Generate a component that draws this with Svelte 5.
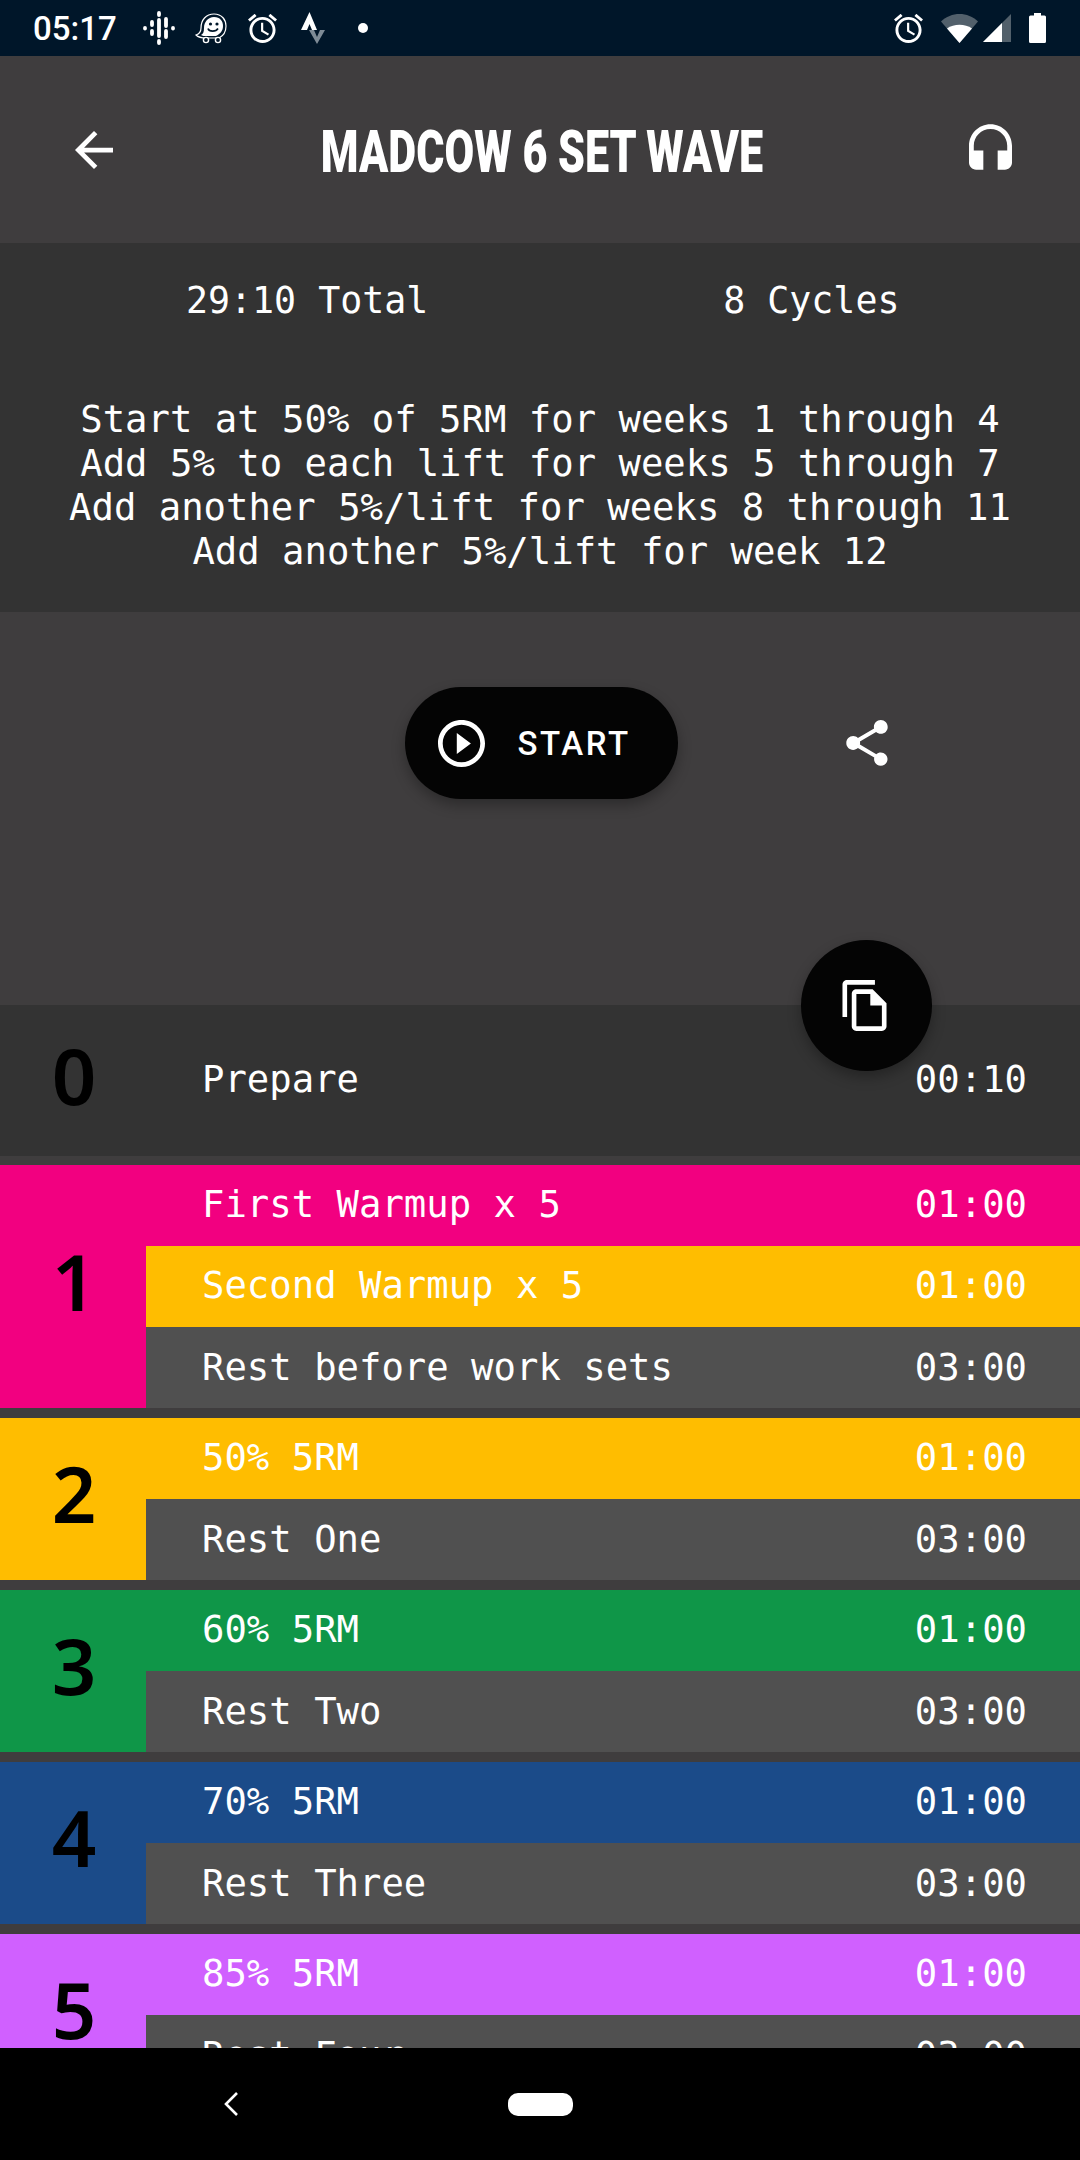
<script lang="ts">
interface Step {
	label: string
	time: string
	color?: string
}

interface Group {
	n: number
	color: string
	steps: Step[]
}

const pink = '#f20080'
const amber = '#ffbd00'
const green = '#0f9648'
const blue = '#1b4b89'
const purple = '#d060ff'

const groups: Group[] = [
	{
		n: 1,
		color: pink,
		steps: [
			{ label: 'First Warmup x 5', time: '01:00', color: pink },
			{ label: 'Second Warmup x 5', time: '01:00', color: amber },
			{ label: 'Rest before work sets', time: '03:00' }
		]
	},
	{
		n: 2,
		color: amber,
		steps: [
			{ label: '50% 5RM', time: '01:00', color: amber },
			{ label: 'Rest One', time: '03:00' }
		]
	},
	{
		n: 3,
		color: green,
		steps: [
			{ label: '60% 5RM', time: '01:00', color: green },
			{ label: 'Rest Two', time: '03:00' }
		]
	},
	{
		n: 4,
		color: blue,
		steps: [
			{ label: '70% 5RM', time: '01:00', color: blue },
			{ label: 'Rest Three', time: '03:00' }
		]
	},
	{
		n: 5,
		color: purple,
		steps: [
			{ label: '85% 5RM', time: '01:00', color: purple },
			{ label: 'Rest Four', time: '03:00' }
		]
	}
]

const notes = [
	'Start at 50% of 5RM for weeks 1 through 4',
	'Add 5% to each lift for weeks 5 through 7',
	'Add another 5%/lift for weeks 8 through 11',
	'Add another 5%/lift for week 12'
]

const alarm =
	'M22 5.72l-4.600-3.860-1.290 1.530 4.600 3.860L22 5.720zM7.880 3.390L6.600 1.860 2 5.710l1.290 1.530 4.590-3.850zM12.500 8H11v6l4.750 2.850.75-1.230-4-2.370V8zM12 4c-4.970 0-9 4.030-9 9s4.020 9 9 9c4.970 0 9-4.030 9-9s-4.030-9-9-9zm0 16c-3.870 0-7-3.130-7-7s3.130-7 7-7 7 3.130 7 7-3.130 7-7 7z'
</script>

<div class="phone">
	<div class="status">
		<span class="clock">05:17</span>
		<svg class="podcasts" width="32" height="34" viewBox="0 0 32 34" fill="none" stroke="#fff" stroke-width="3.800" stroke-linecap="round">
			<path d="M2 17v0.5M9 11v3M9 20v3M16 2v2M16 9v16M16 30v2M23 8v7M23 20v6M30 17v0.5" />
		</svg>
		<svg class="waze" width="32" height="32" viewBox="0 0 32 32" fill="none" stroke="#fff">
			<path d="M6 16c0-8 5-14 13-14s12 6 12 12c0 6-3 10-7 12H11c-3 0-8-1-10-3 3-1 5-3 5-7z" stroke-width="1.2" />
			<path d="M9 16c0-6 4-11 10-11s9 4 9 9c0 5-3 8-7 10h-9c-2 0-5 0-6-1 2-1 3-3 3-7z" fill="#fff" stroke="none" />
			<circle cx="15.500" cy="12" r="1.600" fill="#001629" stroke="none" />
			<circle cx="22" cy="12" r="1.600" fill="#001629" stroke="none" />
			<path d="M13 16.500c1 3.500 8 3.500 10 0" stroke="#001629" stroke-width="1.600" />
			<circle cx="11" cy="28" r="2.600" stroke-width="1.400" fill="#001629" />
			<circle cx="23" cy="28" r="2.600" stroke-width="1.400" fill="#001629" />
		</svg>
		<svg class="alarm" width="29" height="29" viewBox="2 2 20 20">
			<path d={alarm} fill="#fff" />
		</svg>
		<svg class="strava" width="24" height="32" viewBox="0 0 24 32">
			<path d="M8.500 0L16 18h-5L8.500 12 6 18H0z" fill="#fff" />
			<path d="M8 18h5l3 7 3-7h5l-8 14z" fill="#7e8b96" />
		</svg>
		<span class="dot"></span>
		<span class="spacer"></span>
		<svg class="alarm" width="29" height="29" viewBox="2 2 20 20">
			<path d={alarm} fill="#fff" />
		</svg>
		<svg class="wifi" width="37" height="29" viewBox="0 0 37 29">
			<path d="M0 7.500C10-2.500 27-2.500 37 7.500L18.500 29z" fill="#52606b" />
			<path d="M6 14.500c7-5 18-5 25 0L18.500 29z" fill="#fff" />
		</svg>
		<svg class="signal" width="28" height="28" viewBox="0 0 28 28">
			<path d="M0 28L28 0v28z" fill="#52606b" />
			<path d="M0 28L19 9v19z" fill="#fff" />
		</svg>
		<svg class="battery" width="17" height="30" viewBox="0 0 17 30">
			<path d="M5 2.500V0h7v2.500h3.500a1.500 1.500 0 0 1 1.500 1.500v24.500a1.500 1.500 0 0 1-1.500 1.500H1.500A1.500 1.500 0 0 1 0 28.500V4a1.500 1.500 0 0 1 1.500-1.500z" fill="#fff" />
		</svg>
	</div>

	<header>
		<svg class="back" width="38" height="38" viewBox="4 4 16 16">
			<path d="M20 11H7.830l5.590-5.590L12 4l-8 8 8 8 1.410-1.410L7.830 13H20v-2z" fill="#fff" />
		</svg>
		<h1>MADCOW 6 SET WAVE</h1>
		<svg class="phones" width="43" height="46" viewBox="3 1 18 19">
			<path d="M12 1c-4.970 0-9 4.030-9 9v7c0 1.660 1.340 3 3 3h3v-8H5v-2c0-3.870 3.130-7 7-7s7 3.130 7 7v2h-4v8h3c1.660 0 3-1.340 3-3v-7c0-4.970-4.030-9-9-9z" fill="#fff" />
		</svg>
	</header>

	<section class="info">
		<div class="stats">
			<span>29:10 Total</span>
			<span>8 Cycles</span>
		</div>
		<div class="notes">
			{#each notes as line}
				<div>{line}</div>
			{/each}
		</div>
	</section>

	<main>
		<div class="actions">
			<button class="start">
				<svg width="47" height="47" viewBox="2 2 20 20">
					<path d="M10 16.500l6-4.500-6-4.500v9zM12 2C6.480 2 2 6.480 2 12s4.480 10 10 10 10-4.480 10-10S17.520 2 12 2zm0 18c-4.410 0-8-3.590-8-8s3.590-8 8-8 8 3.590 8 8-3.590 8-8 8z" fill="#fff" />
				</svg>
				<span>START</span>
			</button>
			<svg class="share" width="42" height="46" viewBox="3 2 18 20">
				<path d="M18 16.080c-.76 0-1.440.3-1.960.77L8.910 12.700c.05-.23.09-.46.09-.7s-.04-.47-.09-.7l7.050-4.110c.54.5 1.250.81 2.040.81 1.660 0 3-1.340 3-3s-1.340-3-3-3-3 1.340-3 3c0 .24.040.47.090.7L8.040 9.810C7.500 9.310 6.790 9 6 9c-1.660 0-3 1.340-3 3s1.340 3 3 3c.79 0 1.500-.31 2.040-.81l7.120 4.160c-.05.21-.08.43-.08.65 0 1.610 1.310 2.920 2.920 2.920 1.610 0 2.920-1.310 2.920-2.920s-1.310-2.920-2.920-2.920z" fill="#fff" />
			</svg>
		</div>

		<div class="prepare">
			<span class="num">0</span>
			<span class="label">Prepare</span>
			<span class="time">00:10</span>
		</div>

		{#each groups as group (group.n)}
			<div class="group" style="background-color: {group.color}">
				<span class="num">{group.n}</span>
				<div class="steps">
					{#each group.steps as step}
						<div class="step" class:rest={!step.color} style="background-color: {step.color ?? '#505050'}">
							<span class="label">{step.label}</span>
							<span class="time">{step.time}</span>
						</div>
					{/each}
				</div>
			</div>
		{/each}

		<button class="fab" aria-label="Copy">
			<svg width="45" height="51" viewBox="2 1 19 22">
				<path d="M16 1H4c-1.100 0-2 .9-2 2v14h2V3h12V1zm-1 4H8c-1.100 0-1.990.9-1.990 2L6 21c0 1.100.89 2 1.990 2H19c1.100 0 2-.9 2-2V11l-6-6zM8 21V7h6v5h5v9H8z" fill="#fff" />
			</svg>
		</button>
	</main>

	<nav>
		<svg width="16" height="24" viewBox="0 0 16 24" fill="none" stroke="#fff" stroke-width="2.600">
			<path d="M14 1L3 12l11 11" />
		</svg>
		<span class="pill"></span>
		<span></span>
	</nav>
</div>

<style>
:global(body) {
	background: #000;
}

.phone {
	width: 1080px;
	height: 2160px;
	display: flex;
	flex-direction: column;
	overflow: hidden;
	background: #3f3d3e;
	color: #fff;
	font-family: 'DejaVu Sans Mono', monospace;
	font-size: 37.25px;
}

.status {
	height: 56px;
	flex: none;
	display: flex;
	align-items: center;
	padding: 0 34px 0 33px;
	box-sizing: border-box;
	background: #001629;
}

.clock {
	font-family: Roboto, sans-serif;
	font-size: 33px;
	font-weight: 500;
	width: 110px;
}

.waze {
	margin-left: 20px;
}

.status .alarm {
	margin-left: 21px;
}

.strava {
	margin-left: 24px;
}

.dot {
	width: 10px;
	height: 10px;
	border-radius: 50%;
	background: #fff;
	margin-left: 33px;
}

.spacer {
	flex: 1;
}

.wifi {
	margin-left: 18px;
}

.signal {
	margin-left: 5px;
}

.battery {
	margin-left: 18px;
}

header {
	height: 187px;
	flex: none;
	display: grid;
	grid-template-columns: 1fr auto 1fr;
	align-items: center;
	padding: 0 72px 0 75px;
}

h1 {
	margin: 4px 0 0;
	font-family: Roboto, sans-serif;
	font-size: 60px;
	font-weight: 900;
	line-height: 1;
	color: #fff;
	transform: scaleX(0.718);
}

.phones {
	justify-self: end;
	margin: -6px -4px 0 0;
}

.info {
	height: 369px;
	flex: none;
	background: #333;
	box-sizing: border-box;
	padding-top: 36px;
}

.stats {
	display: flex;
	gap: 295px;
	padding-left: 186px;
	line-height: 44px;
	font-size: 36.6px;
}

.notes {
	margin-top: 74px;
	text-align: center;
	line-height: 44px;
}

main {
	flex: 1;
	min-height: 0;
	overflow: hidden;
	position: relative;
}

.actions {
	height: 393px;
	display: grid;
	grid-template-columns: 1fr 273px 1fr;
	align-items: start;
	padding-top: 75px;
	padding-left: 2px;
	box-sizing: border-box;
}

.start {
	grid-column: 2;
	height: 112px;
	border: 0;
	border-radius: 56px;
	background: #040404;
	color: #fff;
	display: flex;
	align-items: center;
	padding: 0 0 0 33px;
	box-shadow: 0 6px 14px rgba(0, 0, 0, 0.3);
	font-family: Roboto, sans-serif;
	font-size: 33px;
	font-weight: 500;
	letter-spacing: 2.6px;
}

.start span {
	margin-left: 33px;
}

.share {
	margin: 33px 0 0 168px;
}

.prepare {
	height: 151px;
	background: #333;
	display: flex;
	align-items: center;
	margin-bottom: 9px;
}

.num {
	width: 146px;
	flex: none;
	text-align: center;
	font-family: 'Noto Sans', sans-serif;
	font-size: 78px;
	font-weight: 600;
	color: #000;
	padding-bottom: 12px;
	padding-left: 2px;
	box-sizing: border-box;
}

.prepare .label {
	margin-left: 56px;
	flex: 1;
}

.prepare .time,
.step .time {
	margin-right: 53px;
}

.prepare .label,
.prepare .time {
	padding-bottom: 3px;
}

.group {
	display: flex;
	align-items: center;
	margin-bottom: 10px;
}

.steps {
	flex: 1;
}

.step {
	height: 81px;
	display: flex;
	align-items: center;
	justify-content: space-between;
	padding: 0 0 3px 56px;
	box-sizing: border-box;
}

.step.rest {
	padding-bottom: 1px;
}

.fab {
	position: absolute;
	left: 801px;
	top: 328px;
	width: 131px;
	height: 131px;
	padding: 0 4px 0 0;
	border: 0;
	border-radius: 50%;
	background: #040404;
	box-shadow: 0 6px 14px rgba(0, 0, 0, 0.3);
	display: flex;
	align-items: center;
	justify-content: center;
}

nav {
	height: 112px;
	flex: none;
	background: #000;
	display: grid;
	grid-template-columns: 1fr 65px 1fr;
	align-items: center;
}

nav svg {
	justify-self: end;
	margin-right: 269px;
}

.pill {
	height: 23px;
	border-radius: 10px;
	background: #fff;
}
</style>
